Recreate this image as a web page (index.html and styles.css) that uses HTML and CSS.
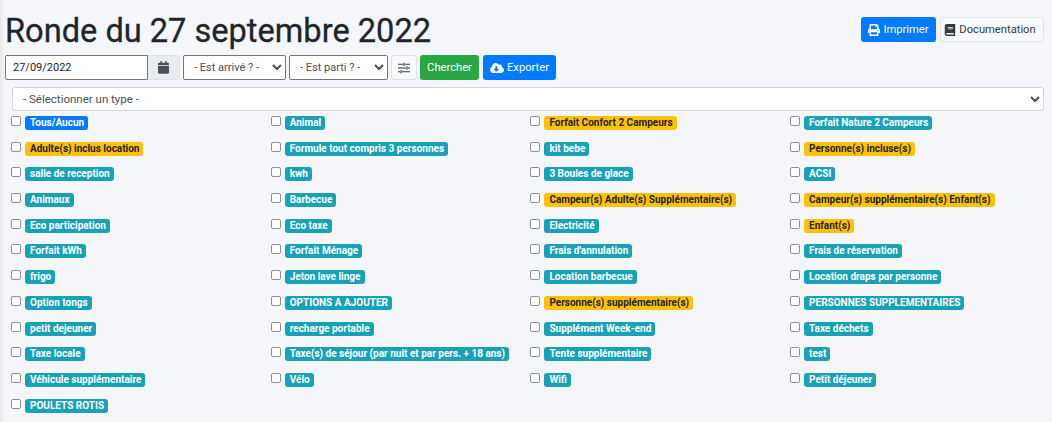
FILE: index.html
```html
<!DOCTYPE html>
<html lang="fr">
<head>
  <meta charset="UTF-8">
  <title>Ronde du 27 septembre 2022</title>
  <link rel="stylesheet" href="styles.css">
</head>
<body>

<header class="top">
  <h1>Ronde du 27 septembre 2022</h1>
  <div class="top-btns">
    <button class="btn btn-blue btn-print">
      <svg class="ico" viewBox="0 0 512 512"><path fill="currentColor" d="M448 192V77.25c0-8.49-3.37-16.62-9.37-22.63L393.37 9.37c-6-6-14.14-9.37-22.63-9.37H96C78.33 0 64 14.33 64 32v160c-35.35 0-64 28.65-64 64v112c0 8.84 7.16 16 16 16h48v96c0 17.67 14.33 32 32 32h320c17.67 0 32-14.33 32-32v-96h48c8.84 0 16-7.16 16-16V256c0-35.35-28.65-64-64-64zm-64 256H128v-96h256v96zm0-224H128V64h192v48c0 8.84 7.16 16 16 16h48v96zm48 72c-13.25 0-24-10.75-24-24 0-13.26 10.75-24 24-24s24 10.74 24 24c0 13.25-10.75 24-24 24z"/></svg>
      Imprimer
    </button>
    <button class="btn btn-light btn-doc">
      <svg class="ico" viewBox="0 0 448 512"><path fill="currentColor" d="M448 360V24c0-13.3-10.7-24-24-24H96C43 0 0 43 0 96v320c0 53 43 96 96 96h328c13.3 0 24-10.7 24-24v-16c0-7.5-3.5-14.3-8.9-18.7-4.2-15.4-4.2-59.3 0-74.7 5.4-4.3 8.9-11.1 8.9-18.6zM128 134c0-3.3 2.7-6 6-6h212c3.3 0 6 2.7 6 6v20c0 3.3-2.7 6-6 6H134c-3.3 0-6-2.7-6-6v-20zm0 64c0-3.3 2.7-6 6-6h212c3.3 0 6 2.7 6 6v20c0 3.3-2.7 6-6 6H134c-3.3 0-6-2.7-6-6v-20zm253.4 250H96c-17.7 0-32-14.3-32-32 0-17.6 14.4-32 32-32h285.4c-1.9 17.1-1.9 46.9 0 64z"/></svg>
      Documentation
    </button>
  </div>
</header>

<form class="filters">
  <div class="date-group">
    <input class="date-input" type="text" value="27/09/2022">
    <span class="date-addon">
      <svg class="ico-cal" viewBox="0 0 448 512"><path fill="currentColor" d="M12 192h424c6.600 0 12 5.400 12 12v260c0 26.500-21.500 48-48 48H48c-26.500 0-48-21.500-48-48V204c0-6.600 5.400-12 12-12zm436-44v-36c0-26.500-21.500-48-48-48h-48V12c0-6.600-5.400-12-12-12h-40c-6.600 0-12 5.400-12 12v52H160V12c0-6.600-5.400-12-12-12h-40c-6.600 0-12 5.400-12 12v52H48C21.500 64 0 85.500 0 112v36c0 6.600 5.400 12 12 12h424c6.600 0 12-5.400 12-12z"/></svg>
    </span>
  </div>
  <select class="native arrive"><option>- Est arrivé ? -</option></select>
  <select class="native parti"><option>- Est parti ? -</option></select>
  <button type="button" class="btn btn-light btn-sliders">
    <svg class="ico" viewBox="0 0 512 512"><path fill="currentColor" d="M496 72H288V48c0-8.800-7.200-16-16-16h-32c-8.800 0-16 7.200-16 16v24H16C7.200 72 0 79.200 0 88v16c0 8.800 7.200 16 16 16h208v24c0 8.800 7.200 16 16 16h32c8.800 0 16-7.200 16-16v-24h208c8.800 0 16-7.200 16-16V88c0-8.800-7.200-16-16-16zM240 64h32v64h-32V64zm256 328H160v-24c0-8.800-7.200-16-16-16h-32c-8.800 0-16 7.200-16 16v24H16c-8.800 0-16 7.200-16 16v16c0 8.800 7.200 16 16 16h80v24c0 8.800 7.200 16 16 16h32c8.800 0 16-7.200 16-16v-24h336c8.800 0 16-7.200 16-16v-16c0-8.800-7.200-16-16-16zM112 384h32v64h-32v-64zm384-152h-80v-24c0-8.800-7.200-16-16-16h-32c-8.800 0-16 7.200-16 16v24H16c-8.800 0-16 7.200-16 16v16c0 8.800 7.200 16 16 16h336v24c0 8.800 7.200 16 16 16h32c8.800 0 16-7.200 16-16v-24h80c8.800 0 16-7.200 16-16v-16c0-8.800-7.200-16-16-16zm-128-8h32v64h-32v-64z" fill-rule="evenodd"/></svg>
  </button>
  <button type="button" class="btn btn-green btn-search">Chercher</button>
  <button type="button" class="btn btn-blue btn-export">
    <svg class="ico ico-cloud" viewBox="0 0 640 512"><path fill="currentColor" d="M537.600 226.600c4.100-10.700 6.400-22.400 6.400-34.600 0-53-43-96-96-96-19.700 0-38.100 6-53.300 16.200C367 64.200 315.300 32 256 32c-88.400 0-160 71.600-160 160 0 2.700.1 5.400.2 8.100C40.200 219.800 0 273.200 0 336c0 79.500 64.500 144 144 144h368c70.700 0 128-57.300 128-128 0-61.900-44-113.600-102.400-125.400zm-132.900 88.700L299.300 420.700c-6.200 6.200-16.400 6.200-22.600 0L171.300 315.300c-10.100-10.100-2.900-27.300 11.300-27.300H248V176c0-8.800 7.200-16 16-16h48c8.800 0 16 7.200 16 16v112h65.400c14.200 0 21.400 17.200 11.300 27.300z"/></svg>
    Exporter
  </button>
</form>

<div class="type-row">
  <select class="type-select"><option>- Sélectionner un type -</option></select>
</div>

<div class="types">
  <label class="type"><input type="checkbox"><span class="badge b-blue">Tous/Aucun</span></label>
  <label class="type"><input type="checkbox"><span class="badge">Animal</span></label>
  <label class="type"><input type="checkbox"><span class="badge b-yellow">Forfait Confort 2 Campeurs</span></label>
  <label class="type"><input type="checkbox"><span class="badge">Forfait Nature 2 Campeurs</span></label>

  <label class="type"><input type="checkbox"><span class="badge b-yellow">Adulte(s) inclus location</span></label>
  <label class="type"><input type="checkbox"><span class="badge">Formule tout compris 3 personnes</span></label>
  <label class="type"><input type="checkbox"><span class="badge">kit bebe</span></label>
  <label class="type"><input type="checkbox"><span class="badge b-yellow">Personne(s) incluse(s)</span></label>

  <label class="type"><input type="checkbox"><span class="badge">salle de reception</span></label>
  <label class="type"><input type="checkbox"><span class="badge">kwh</span></label>
  <label class="type"><input type="checkbox"><span class="badge">3 Boules de glace</span></label>
  <label class="type"><input type="checkbox"><span class="badge">ACSI</span></label>

  <label class="type"><input type="checkbox"><span class="badge">Animaux</span></label>
  <label class="type"><input type="checkbox"><span class="badge">Barbecue</span></label>
  <label class="type"><input type="checkbox"><span class="badge b-yellow">Campeur(s) Adulte(s) Supplémentaire(s)</span></label>
  <label class="type"><input type="checkbox"><span class="badge b-yellow">Campeur(s) supplémentaire(s) Enfant(s)</span></label>

  <label class="type"><input type="checkbox"><span class="badge">Eco participation</span></label>
  <label class="type"><input type="checkbox"><span class="badge">Eco taxe</span></label>
  <label class="type"><input type="checkbox"><span class="badge">Electricité</span></label>
  <label class="type"><input type="checkbox"><span class="badge b-yellow">Enfant(s)</span></label>

  <label class="type"><input type="checkbox"><span class="badge">Forfait kWh</span></label>
  <label class="type"><input type="checkbox"><span class="badge">Forfait Ménage</span></label>
  <label class="type"><input type="checkbox"><span class="badge">Frais d'annulation</span></label>
  <label class="type"><input type="checkbox"><span class="badge">Frais de réservation</span></label>

  <label class="type"><input type="checkbox"><span class="badge">frigo</span></label>
  <label class="type"><input type="checkbox"><span class="badge">Jeton lave linge</span></label>
  <label class="type"><input type="checkbox"><span class="badge">Location barbecue</span></label>
  <label class="type"><input type="checkbox"><span class="badge">Location draps par personne</span></label>

  <label class="type"><input type="checkbox"><span class="badge">Option tongs</span></label>
  <label class="type"><input type="checkbox"><span class="badge">OPTIONS A AJOUTER</span></label>
  <label class="type"><input type="checkbox"><span class="badge b-yellow">Personne(s) supplémentaire(s)</span></label>
  <label class="type"><input type="checkbox"><span class="badge">PERSONNES SUPPLEMENTAIRES</span></label>

  <label class="type"><input type="checkbox"><span class="badge">petit dejeuner</span></label>
  <label class="type"><input type="checkbox"><span class="badge">recharge portable</span></label>
  <label class="type"><input type="checkbox"><span class="badge">Supplément Week-end</span></label>
  <label class="type"><input type="checkbox"><span class="badge">Taxe déchets</span></label>

  <label class="type"><input type="checkbox"><span class="badge">Taxe locale</span></label>
  <label class="type"><input type="checkbox"><span class="badge">Taxe(s) de séjour (par nuit et par pers. + 18 ans)</span></label>
  <label class="type"><input type="checkbox"><span class="badge">Tente supplémentaire</span></label>
  <label class="type"><input type="checkbox"><span class="badge">test</span></label>

  <label class="type"><input type="checkbox"><span class="badge">Véhicule supplémentaire</span></label>
  <label class="type"><input type="checkbox"><span class="badge">Vélo</span></label>
  <label class="type"><input type="checkbox"><span class="badge">Wifi</span></label>
  <label class="type"><input type="checkbox"><span class="badge">Petit déjeuner</span></label>

  <label class="type"><input type="checkbox"><span class="badge">POULETS ROTIS</span></label>
</div>

</body>
</html>
```

FILE: styles.css
```css
* {
  box-sizing: border-box;
}

html, body {
  height: 100%;
}

body {
  margin: 0;
  padding: 0 8px 0 5px;
  background: #f4f6f9;
  color: #212529;
  font-family: Roboto, "Open Sans", sans-serif;
  font-size: 11px;
  overflow: hidden;
  box-shadow: inset 5px 0 4px -3px rgba(0,0,0,0.07);
}

.top {
  display: flex;
  justify-content: space-between;
  align-items: flex-start;
  height: 55px;
  padding-top: 10px;
}

h1 {
  margin: 0;
  font-size: 32.6px;
  font-weight: 400;
  line-height: 42px;
  white-space: nowrap;
  -webkit-text-stroke: 0.3px #212529;
}

.top-btns {
  display: flex;
  gap: 4px;
  padding-top: 7px;
}

.btn {
  display: inline-flex;
  align-items: center;
  justify-content: center;
  gap: 3px;
  height: 25px;
  padding: 0;
  border: 1px solid transparent;
  border-radius: 3px;
  font-family: inherit;
  font-size: 11.2px;
  white-space: nowrap;
}

.btn-print {
  width: 75px;
}

.btn-doc {
  width: 104px;
  padding-right: 4px;
}

.btn-search {
  width: 59px;
}

.btn-export {
  width: 73px;
  margin-left: 1px;
}

.btn-blue {
  background: #007bff;
  color: #fff;
}

.btn-green {
  background: #28a745;
  color: #fff;
}

.btn-light {
  background: #f8f9fa;
  border-color: #dfe2e5;
  color: #343a40;
}

.ico {
  width: 12px;
  height: 12px;
}

.ico-cloud {
  width: 14px;
}

.filters {
  display: flex;
  align-items: center;
  gap: 3px;
  height: 25px;
}

.date-group {
  display: flex;
  height: 25px;
}

.date-input {
  width: 143px;
  height: 25px;
  padding: 0 7px;
  border: 1px solid #767676;
  border-radius: 2px 0 0 2px;
  background: #fff;
  color: #212529;
  font-family: inherit;
  font-size: 11px;
}

.date-addon {
  display: flex;
  align-items: center;
  justify-content: center;
  width: 32px;
  background: #e9ecef;
  border: 1px solid #dee2e6;
  border-left: 0;
  border-radius: 0 3px 3px 0;
  color: #495057;
}

.ico-cal {
  width: 11px;
  height: 13px;
}

.native {
  height: 25px;
  padding: 0 2px 0 6px;
  border: 1px solid #767676;
  border-radius: 2px;
  background: #fff;
  color: #495057;
  font-family: inherit;
  font-size: 11px;
}

.arrive {
  width: 103px;
}

.parti {
  width: 99px;
}

.btn-sliders {
  width: 26px;
}

.type-row {
  padding: 7px 0 0 7px;
}

.type-select {
  width: 100%;
  height: 24px;
  padding: 0 6px;
  border: 1px solid #ced4da;
  border-radius: 3px;
  background: #fff;
  color: #495057;
  font-family: inherit;
  font-size: 11.5px;
}

.types {
  display: grid;
  grid-template-columns: repeat(4, 259.7px);
  grid-auto-rows: 25.7px;
  padding: 5px 0 0 6px;
}

.type {
  display: flex;
  align-items: flex-start;
  gap: 4px;
}

.type input {
  appearance: none;
  width: 10px;
  height: 10px;
  margin: 0;
  flex: none;
  background: #fff;
  border: 1px solid #8f8f8f;
  border-radius: 2px;
}

.badge {
  padding: 1px 4px 1px 5px;
  height: 14px;
  border-radius: 3px;
  background: #17a2b8;
  color: #fff;
  font-size: 10px;
  font-weight: 700;
  line-height: 12px;
  white-space: nowrap;
}

.b-blue {
  background: #007bff;
}

.b-yellow {
  background: #ffc107;
  color: #212529;
}
```
